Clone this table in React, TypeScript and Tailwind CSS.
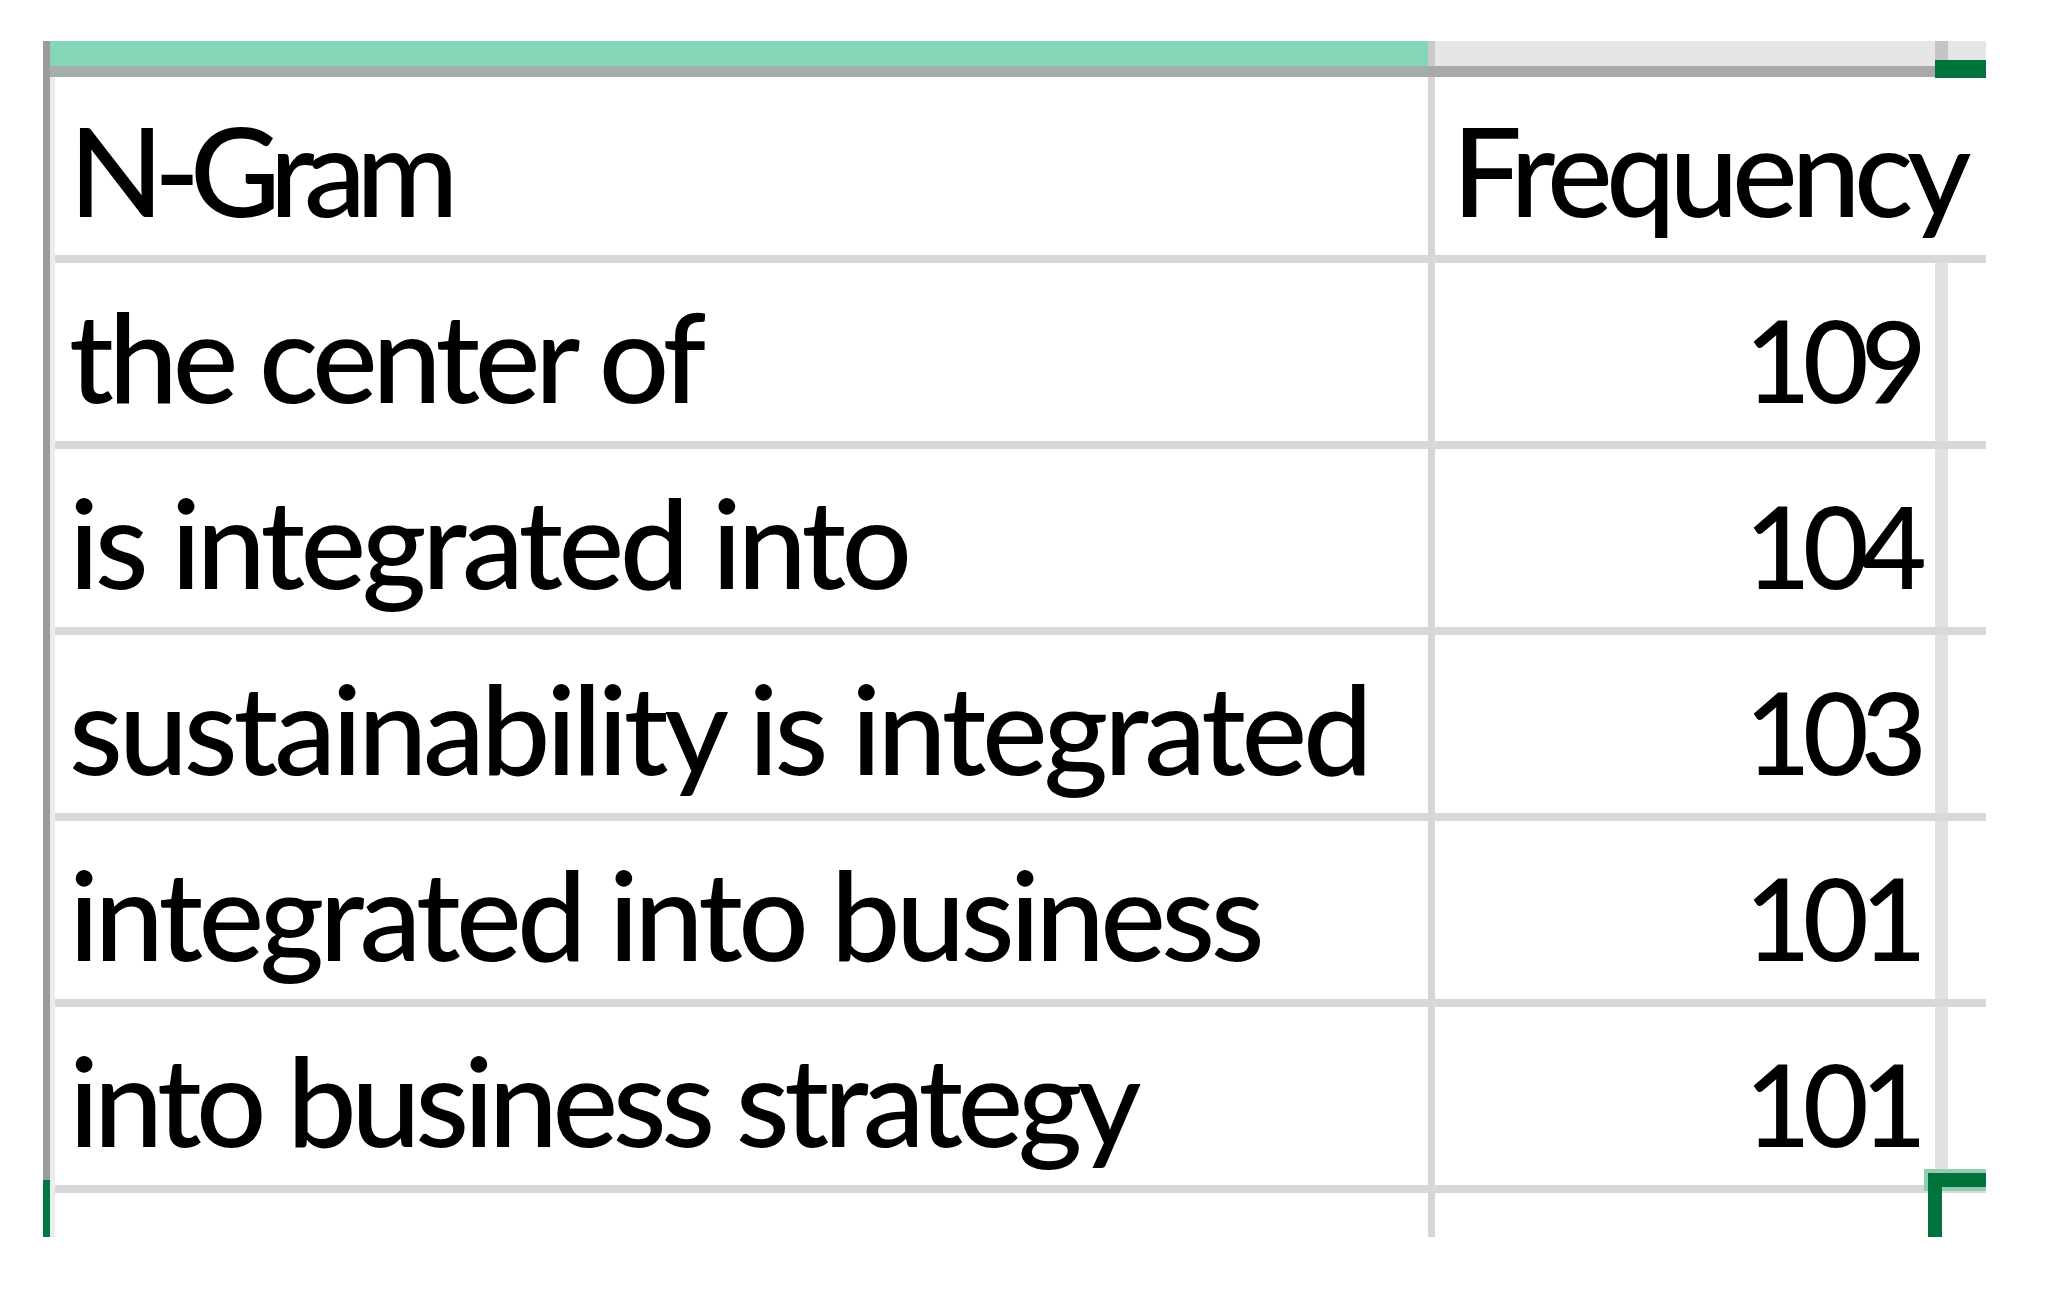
import React from 'react'

const rows: [string, number, string][] = [
  ['the center of', 109, 'tracking-[-5.3px]'],
  ['is integrated into', 104, 'tracking-[-4.5px]'],
  ['sustainability is integrated', 103, 'tracking-[-4.2px]'],
  ['integrated into business', 101, 'tracking-[-4.6px]'],
  ['into business strategy', 101, 'tracking-[-5.4px]'],
]

const App = () => {
  return (
    <div className="w-[2053px] h-[1294px] bg-white pl-[43px] pt-[41px] font-['Lato',sans-serif] text-black">
      <div className="relative flex w-[1943px] h-[1196px] overflow-hidden">
        {/* row-number edge */}
        <div className="flex flex-col w-[7px] shrink-0">
          <div className="h-[1139px] bg-[#9b9b9b]" />
          <div className="flex-1 bg-[#00783f]" />
        </div>

        <div className="flex flex-col w-[1936px] shrink-0">
          {/* column header strip */}
          <div className="flex h-[36px] shrink-0">
            <div className="w-[1378px] bg-[#84d6b6] border-b-[11px] border-[#a6aeaa]" />
            <div className="w-[7px] bg-[#c9c9c9] border-b-[11px] border-[#a9a9a9]" />
            <div className="w-[500px] bg-[#e6e6e6] border-b-[11px] border-[#a9a9a9]" />
            <div className="w-[13px] bg-[#c4c4c4] border-b-[11px] border-[#a9a9a9]" />
            <div className="w-[38px] bg-[#e6e6e6] border-b-[11px] border-[#a9a9a9]" />
          </div>

          <div className="flex flex-1">
            <div className="w-[5px] bg-[#ececec] shrink-0" />
            <div className="flex flex-col w-[1931px]">
              {/* header row */}
              <div className="flex h-[186px] border-b-[8px] border-[#d8d8d8] text-[124px] leading-none font-medium">
                <div className="w-[1373px] flex items-end pl-[14px] pb-[24px] whitespace-nowrap tracking-[-10px]">N-Gram</div>
                <div className="w-[7px] bg-[#d6d6d6]" />
                <div className="w-[500px] flex items-end pl-[17px] pb-[24px] whitespace-nowrap tracking-[-6.5px]">Frequency</div>
                <div className="w-[13px]" />
                <div className="w-[38px]" />
              </div>

              {rows.map((row, index) => (
                <div
                  key={index}
                  className="flex h-[186px] border-b-[8px] border-[#d8d8d8] leading-none font-medium"
                >
                  <div className={'w-[1373px] flex items-end pl-[14px] pb-[24px] whitespace-nowrap text-[124px] ' + row[2]}>
                    {row[0]}
                  </div>
                  <div className="w-[7px] bg-[#d6d6d6]" />
                  <div className="w-[500px] flex items-end justify-end pr-[16px] pb-[25px] text-[114px] tracking-[-8px]">
                    {row[1]}
                  </div>
                  <div className="w-[13px] bg-[#e1e1e1]" />
                  <div className="w-[38px]" />
                </div>
              ))}

              {/* partial next row */}
              <div className="flex flex-1">
                <div className="w-[1373px]" />
                <div className="w-[7px] bg-[#d6d6d6]" />
                <div className="w-[500px]" />
              </div>
            </div>
          </div>
        </div>

        {/* selection marks */}
        <div className="absolute left-[1892px] top-[19px] w-[51px] h-[18px] bg-[#00733c]" />
        <div className="absolute left-[1885px] top-[1132px] w-[58px] h-[14px] bg-[#00733c] shadow-[0_0_0_4px_#8fcfb0]" />
        <div className="absolute left-[1885px] top-[1132px] w-[14px] h-[64px] bg-[#00733c]" />
      </div>
    </div>
  )
}

export default App
